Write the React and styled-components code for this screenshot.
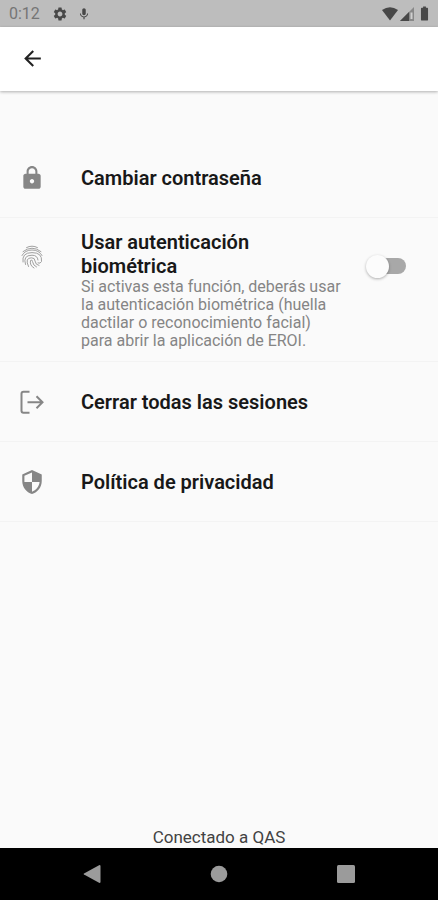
import React, { useState } from "react";
import styled, { createGlobalStyle } from "styled-components";
import {
  MdArrowBack,
  MdBatteryFull,
  MdLock,
  MdMic,
  MdSecurity,
  MdSettings,
} from "react-icons/md";

const GlobalStyle = createGlobalStyle`
  * {
    box-sizing: border-box;
  }
  body {
    margin: 0;
    background-color: #fafafa;
    font-family: Roboto, "Liberation Sans", sans-serif;
  }
  svg {
    display: block;
    flex-shrink: 0;
  }
`;

const Screen = styled.div`
  display: flex;
  flex-direction: column;
  min-height: 100vh;
`;

const StatusBar = styled.div`
  display: flex;
  justify-content: space-between;
  align-items: center;
  height: 27px;
  padding: 0 5px 0 9px;
  background-color: #bdbdbd;
  color: #484848;
`;

const StatusGroup = styled.div`
  display: flex;
  align-items: center;
  gap: ${(props) => props.$gap}px;
`;

const Clock = styled.span`
  margin-right: 3px;
  color: #757575;
  font-size: 16px;
  line-height: 28px;
`;

const AppBar = styled.header`
  display: flex;
  align-items: center;
  height: 64px;
  padding: 0 8px 2px;
  background-color: #ffffff;
  box-shadow: 0 1px 3px rgba(0, 0, 0, 0.3);
`;

const IconButton = styled.button`
  display: flex;
  justify-content: center;
  align-items: center;
  width: 48px;
  height: 48px;
  padding: 0;
  border: none;
  background: none;
  color: ${(props) => props.color};
`;

const Main = styled.main`
  display: flex;
  flex-direction: column;
  flex: 1;
  padding-top: 47px;
`;

const List = styled.ul`
  margin: 0;
  padding: 0;
  list-style: none;
`;

const Item = styled.li`
  border-bottom: 1px solid #f3f3f3;
`;

const Row = styled.button`
  display: flex;
  align-items: center;
  width: 100%;
  min-height: 79px;
  padding: 0 20px;
  border: none;
  background: none;
  color: #868686;
  font-family: inherit;
  text-align: left;
`;

const SwitchRow = styled.label`
  display: flex;
  align-items: flex-start;
  padding: 12px 28px 11px 20px;
  color: #a0a0a0;
`;

const IconBox = styled.span`
  display: flex;
  justify-content: center;
  width: 24px;
  margin-right: 37px;
  padding-top: ${(props) => props.$top || 0}px;
`;

const Texts = styled.span`
  flex: 1;
  max-width: 260px;
`;

const Title = styled.span`
  display: block;
  color: #181818;
  font-size: 20px;
  font-weight: 600;
  line-height: 24px;
`;

const Subtitle = styled.span`
  display: block;
  color: #858585;
  font-size: 16px;
  line-height: 18px;
`;

const Switch = styled.input`
  appearance: none;
  display: flex;
  align-items: center;
  width: 44px;
  height: 24px;
  margin: 24px 0 0 auto;

  &::before {
    content: "";
    width: 23px;
    height: 23px;
    border-radius: 50%;
    background-color: #fcfcfc;
    box-shadow: 0 1px 3px rgba(0, 0, 0, 0.3);
    z-index: 1;
  }
  &::after {
    content: "";
    width: 32px;
    height: 16px;
    margin-left: -15px;
    border-radius: 8px;
    background-color: #a8a8a8;
  }
  &:checked::before {
    order: 1;
    margin-left: -15px;
  }
  &:checked::after {
    margin-left: 0;
  }
`;

const Footer = styled.footer`
  margin-top: auto;
  color: #424242;
  font-size: 17px;
  line-height: 22px;
  text-align: center;
`;

const NavBar = styled.nav`
  display: flex;
  justify-content: space-around;
  align-items: center;
  height: 52px;
  padding: 0 29px;
  background-color: #000000;
`;

const FingerprintIcon = () => (
  <svg width="24" height="24" viewBox="0 0 24 24" fill="none" stroke="currentColor" strokeWidth="1" strokeLinecap="round">
    <path d="M6.5 2.6Q12 -.4 17.5 2.6" />
    <path d="M3 6.6Q12 -.4 21 6.6" />
    <path d="M2 10.5Q5 5 12 5T22 10.5" />
    <path d="M3 17Q1.5 7.6 12 7.6T21.5 16.5Q20.5 19 18 18" />
    <path d="M5.5 19.5Q2.5 10.2 12 10.2Q17.5 10.2 18 15" />
    <path d="M8.5 21.5Q4.5 12.8 11.5 12.8Q15 12.8 15 16Q15.5 20 19 20.5" />
    <path d="M14 23Q9.5 20.5 10.5 15.5Q12 14 12.5 16.5Q13 20.5 16.5 22" />
  </svg>
);

const LogoutIcon = () => (
  <svg width="24" height="24" viewBox="0 0 24 24" fill="none" stroke="currentColor" strokeWidth="2">
    <path d="M9.5 1.7H3.5Q1.5 1.7 1.5 3.7V20.7Q1.5 22.7 3.5 22.7H9.5" />
    <path d="M7.5 12.2H22.5M16.5 6.2L22.5 12.2L16.5 18.2" />
  </svg>
);

const WifiIcon = () => (
  <svg width="16" height="14" viewBox="0 0 16 14" fill="currentColor">
    <path d="M0 3Q8-2.5 16 3L8 13.5Z" />
  </svg>
);

const SignalIcon = () => (
  <svg width="14" height="14" viewBox="0 0 14 14" fill="currentColor">
    <path d="M14 0V14H0Z" opacity="0.45" />
    <path d="M9 5V14H0Z" />
    <path d="M10.5 5.5H12.5V12H10.5Z" fill="#d0d0d0" />
  </svg>
);

function App() {
  const [biometric, setBiometric] = useState(false);

  return (
    <Screen>
      <GlobalStyle />
      <StatusBar>
        <StatusGroup $gap={9}>
          <Clock>0:12</Clock>
          <MdSettings size={16} />
          <MdMic size={14} />
        </StatusGroup>
        <StatusGroup $gap={2}>
          <WifiIcon />
          <SignalIcon />
          <MdBatteryFull size={17} />
        </StatusGroup>
      </StatusBar>
      <AppBar>
        <IconButton color="#222222" aria-label="Atrás">
          <MdArrowBack size={25} />
        </IconButton>
      </AppBar>
      <Main>
        <List>
          <Item>
            <Row>
              <IconBox>
                <MdLock size={26} />
              </IconBox>
              <Title>Cambiar contraseña</Title>
            </Row>
          </Item>
          <Item>
            <SwitchRow>
              <IconBox $top={15}>
                <FingerprintIcon />
              </IconBox>
              <Texts>
                <Title>Usar autenticación biométrica</Title>
                <Subtitle>
                  Si activas esta función, deberás usar la autenticación
                  biométrica (huella dactilar o reconocimiento facial) para
                  abrir la aplicación de EROI.
                </Subtitle>
              </Texts>
              <Switch
                type="checkbox"
                role="switch"
                checked={biometric}
                onChange={(event) => setBiometric(event.target.checked)}
              />
            </SwitchRow>
          </Item>
          <Item>
            <Row>
              <IconBox>
                <LogoutIcon />
              </IconBox>
              <Title>Cerrar todas las sesiones</Title>
            </Row>
          </Item>
          <Item>
            <Row>
              <IconBox>
                <MdSecurity size={26} />
              </IconBox>
              <Title>Política de privacidad</Title>
            </Row>
          </Item>
        </List>
        <Footer>Conectado a QAS</Footer>
      </Main>
      <NavBar>
        <IconButton color="#9b9b9b" aria-label="Volver">
          <svg width="18" height="18" viewBox="0 0 18 18" fill="currentColor">
            <path d="M16.5 0Q17.5 0 17.5 1V17Q17.5 18 16.5 18L1 9.6Q0 9 1 8.4Z" />
          </svg>
        </IconButton>
        <IconButton color="#9b9b9b" aria-label="Inicio">
          <svg width="18" height="18" viewBox="0 0 18 18" fill="currentColor">
            <circle cx="9" cy="9" r="8.3" />
          </svg>
        </IconButton>
        <IconButton color="#9b9b9b" aria-label="Recientes">
          <svg width="18" height="18" viewBox="0 0 18 18" fill="currentColor">
            <rect width="18" height="18" rx="1.5" />
          </svg>
        </IconButton>
      </NavBar>
    </Screen>
  );
}

export default App;
